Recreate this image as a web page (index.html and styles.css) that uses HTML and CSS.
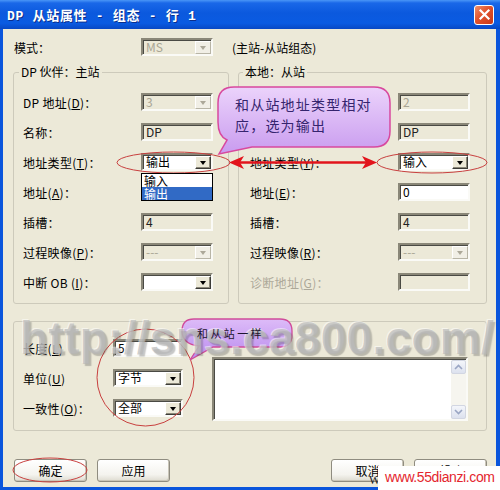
FILE: index.html
```html
<!DOCTYPE html>
<html lang="zh-CN">
<head>
<meta charset="utf-8">
<title>DP 从站属性 - 组态 - 行 1</title>
<link rel="stylesheet" href="styles.css">
</head>
<body>
<div class="window">
  <div class="titlebar">
    <span class="title">DP 从站属性 - 组态 - 行 1</span>
    <span class="close"><svg width="13" height="13" viewBox="0 0 13 13"><path d="M2.5 2.5 L10.5 10.5 M10.5 2.5 L2.5 10.5" stroke="#fff" stroke-width="2.2" stroke-linecap="square"/></svg></span>
  </div>
  <div class="client">
    <div class="mode-row">
      <span class="mode-label">模式：</span>
      <span class="combo disabled"><span class="val">MS</span><span class="drop"><i class="tri"></i></span></span>
      <span class="mode-note">(主站-从站组态)</span>
    </div>

    <div class="groups">
      <fieldset class="group g-left">
        <legend>DP 伙伴：主站</legend>
        <div class="rows">
          <span class="lbl">DP 地址(<u>D</u>)：</span>
          <span class="combo disabled"><span class="val">3</span><span class="drop"><i class="tri"></i></span></span>

          <span class="lbl">名称：</span>
          <span class="field ro">DP</span>

          <span class="lbl">地址类型(<u>T</u>)：</span>
          <span class="combo-wrap">
            <span class="combo"><span class="val">输出</span><span class="drop"><i class="tri"></i></span></span>
            <span class="droplist"><span class="opt">输入</span><span class="opt sel">输出</span></span>
          </span>

          <span class="lbl">地址(<u>A</u>)：</span>
          <span class="empty"></span>

          <span class="lbl">插槽：</span>
          <span class="field ro">4</span>

          <span class="lbl">过程映像(<u>P</u>)：</span>
          <span class="combo disabled"><span class="val">---</span><span class="drop"><i class="tri"></i></span></span>

          <span class="lbl">中断 OB (<u>I</u>)：</span>
          <span class="combo"><span class="val"></span><span class="drop"><i class="tri"></i></span></span>
        </div>
      </fieldset>

      <fieldset class="group g-right">
        <legend>本地：从站</legend>
        <div class="rows">
          <span class="lbl">DP 地址(<u>S</u>)：</span>
          <span class="field dis">2</span>

          <span class="lbl">名称：</span>
          <span class="field ro">DP</span>

          <span class="lbl">地址类型(<u>Y</u>)：</span>
          <span class="combo"><span class="val">输入</span><span class="drop"><i class="tri"></i></span></span>

          <span class="lbl">地址(<u>E</u>)：</span>
          <span class="field">0</span>

          <span class="lbl">插槽：</span>
          <span class="field ro">4</span>

          <span class="lbl">过程映像(<u>R</u>)：</span>
          <span class="combo disabled"><span class="val">---</span><span class="drop"><i class="tri"></i></span></span>

          <span class="lbl grey">诊断地址(<u>G</u>)：</span>
          <span class="field dis"></span>
        </div>
      </fieldset>
    </div>

    <fieldset class="group g-bottom">
      <div class="bgrid">
        <span class="lbl">长度(<u>L</u>)</span>
        <span class="field">5</span>
        <span class="lbl">单位(<u>U</u>)</span>
        <span class="combo short"><span class="val">字节</span><span class="drop"><i class="tri"></i></span></span>
        <span class="lbl">一致性(<u>O</u>)：</span>
        <span class="combo short"><span class="val">全部</span><span class="drop"><i class="tri"></i></span></span>
        <div class="memo">
          <div class="memo-text"></div>
          <div class="vscroll">
            <span class="sbtn"><svg width="9" height="6" viewBox="0 0 9 6"><path d="M1 5 L4.5 1.5 L8 5" fill="none" stroke="#9AA6C4" stroke-width="1.6"/></svg></span>
            <span class="strack"></span>
            <span class="sbtn"><svg width="9" height="6" viewBox="0 0 9 6"><path d="M1 1 L4.5 4.5 L8 1" fill="none" stroke="#9AA6C4" stroke-width="1.6"/></svg></span>
          </div>
        </div>
      </div>
    </fieldset>

    <div class="buttons">
      <div class="btn-pair">
        <span class="btn">确定</span>
        <span class="btn">应用</span>
      </div>
      <div class="btn-pair">
        <span class="btn">取消</span>
        <span class="btn">帮助</span>
      </div>
    </div>
  </div>

  <svg class="annot" width="500" height="490" viewBox="0 0 500 490">
    <defs>
      <linearGradient id="bub1" x1="0" y1="0" x2="0" y2="1">
        <stop offset="0" stop-color="#EBD3FB"/>
        <stop offset="1" stop-color="#C99BEF"/>
      </linearGradient>
      <linearGradient id="bub2" x1="0" y1="0" x2="0" y2="1">
        <stop offset="0" stop-color="#DDBBF8"/>
        <stop offset="1" stop-color="#B98BEE"/>
      </linearGradient>
    </defs>
    <path d="M234 87 H374 Q390 87 390 103 V131 Q390 147 374 147 H252 L219 154 L227 140 Q218 136 218 122 V103 Q218 87 234 87 Z" fill="url(#bub1)" stroke="#D8489E" stroke-width="1.5"/>
    <text class="btxt" x="235" y="110">和从站地址类型相对</text>
    <text class="btxt" x="235" y="131">应，选为输出</text>

    <ellipse cx="173.5" cy="162.5" rx="56.5" ry="10.5" fill="none" stroke="#C8403F" stroke-width="1"/>
    <ellipse cx="432" cy="162.5" rx="55" ry="10.5" fill="none" stroke="#C8403F" stroke-width="1"/>
    <ellipse cx="50" cy="470" rx="37" ry="12" fill="none" stroke="#C8403F" stroke-width="1"/>
    <ellipse cx="145.5" cy="377.5" rx="48.5" ry="48.5" fill="none" stroke="#C8403F" stroke-width="1"/>

    <line x1="238" y1="162.5" x2="368" y2="162.5" stroke="#E2141C" stroke-width="2.5"/>
    <path d="M229 162.5 L244 156 L240 162.5 L244 169 Z" fill="#E2141C"/>
    <path d="M377 162.5 L362 156 L366 162.5 L362 169 Z" fill="#E2141C"/>

    <path d="M194 319 H280 Q292 319 292 331 V335 Q292 347 280 347 H213 L190 360 L199 346 Q182 344 182 331 Q182 319 194 319 Z" fill="url(#bub2)" stroke="#D04C9A" stroke-width="1.3"/>
  </svg>

  <div class="watermark">http://sns.ca800.com/</div>

  <svg class="annot" width="500" height="490" viewBox="0 0 500 490">
    <text class="btxt2" x="197" y="338">和从站一样</text>
  </svg>

  <span class="stray">W</span>
  <div class="logo">www.55dianzi.com</div>
</div>
</body>
</html>
```

FILE: styles.css
```css
* { box-sizing: border-box; }
html, body { margin: 0; padding: 0; }
body {
  width: 500px;
  height: 490px;
  overflow: hidden;
  font-family: "Noto Sans CJK SC", sans-serif;
  font-size: 12px;
  color: #000;
  background: #fff;
}

.window {
  position: relative;
  width: 500px;
  height: 490px;
  background: #0A55DC;
  display: flex;
  flex-direction: column;
}

/* title bar */
.titlebar {
  height: 29px;
  flex: none;
  display: flex;
  align-items: center;
  padding: 0 6px 0 7px;
  background: linear-gradient(#4A96F7 0, #1A68E8 3px, #0B59DE 45%, #0A5BE2 80%, #0848C4 100%);
}
.title {
  font-family: "Liberation Mono", "Noto Sans CJK SC", monospace;
  font-weight: bold;
  font-size: 13px;
  letter-spacing: 0.7px;
  color: #fff;
  text-shadow: 1px 1px 0 #0B2E8C;
  white-space: pre;
}
.close {
  margin-left: auto;
  width: 20px;
  height: 20px;
  border: 1px solid #fff;
  border-radius: 3px;
  background: linear-gradient(135deg, #F0906A 0%, #E1522C 45%, #C8381A 100%);
  display: flex;
  align-items: center;
  justify-content: center;
}

/* client area */
.client {
  flex: 1;
  margin: 0 4px 3px 3px;
  background: #ECE9D8;
  padding: 0 9px 0 10px;
  display: flex;
  flex-direction: column;
}

.mode-row {
  margin-top: 9px;
  height: 18px;
  display: flex;
  align-items: center;
}
.mode-label { margin-left: 1px; width: 127px; }
.mode-note { margin-left: 19px; }

/* controls */
.combo, .field {
  height: 18px;
  width: 72px;
  border: 2px solid;
  border-color: #8A8778 #FAFAF6 #FAFAF6 #8A8778;
  box-shadow: inset 1px 1px 0 #4A4A44;
  background: #fff;
  line-height: 14px;
  font-size: 12px;
}
.field { padding-left: 3px; display: block; }
.field.ro { background: #ECE9D8; color: #222; }
.field.dis { background: #ECE9D8; color: #A8A594; }

.combo { display: flex; align-items: stretch; }
.combo .val { flex: 1; padding-left: 3px; white-space: nowrap; }
.combo .drop {
  width: 16px;
  flex: none;
  border: 1px solid;
  border-color: #fff #3C3C38 #3C3C38 #fff;
  box-shadow: inset -1px -1px 0 #8A8778;
  background: #ECE9D8;
  display: flex;
  align-items: center;
  justify-content: center;
  margin: 1px 0 0 0;
}
.tri {
  display: block;
  width: 0;
  height: 0;
  border-left: 3.5px solid transparent;
  border-right: 3.5px solid transparent;
  border-top: 4px solid #000;
}
.combo.disabled { background: #ECE9D8; color: #A8A594; }
.combo.disabled .drop {
  border-color: #fff #B8B5A6 #B8B5A6 #fff;
  box-shadow: none;
  background: #F1EFE6;
}
.combo.disabled .tri { border-top-color: #ACA899; }
.combo.short { width: 70px; }

.combo-wrap { position: relative; display: block; width: 72px; }
.droplist {
  position: absolute;
  left: 0;
  top: 20px;
  width: 72px;
  border: 1px solid #000;
  background: #fff;
  display: flex;
  flex-direction: column;
  z-index: 2;
}
.opt { height: 13px; line-height: 13px; padding-left: 2px; }
.opt.sel { background: #316AC5; color: #fff; }

/* group boxes */
.groups {
  margin-top: 8px;
  display: grid;
  grid-template-columns: 216px 249px;
  column-gap: 9px;
}
.group {
  margin: 0;
  min-width: 0;
  border: 1px solid #CDCABB;
  border-radius: 3px;
}
.group legend { padding: 0 2px; line-height: 16px; }
.g-left { padding: 7px 15px 6px 9px; }
.g-left legend { margin-left: -4px; }
.g-right { padding: 7px 16px 6px 11px; }
.g-right legend { margin-left: -7px; }

.rows {
  display: grid;
  grid-template-columns: 1fr 72px;
  grid-auto-rows: 30px;
  align-items: center;
}
.lbl { white-space: nowrap; letter-spacing: 0.3px; }
.lbl.grey { color: #ACA899; }
.lbl u { text-underline-offset: 1px; }

.g-bottom {
  margin-top: 17px;
  padding: 11px 18px 7px 9px;
}
.bgrid {
  display: grid;
  grid-template-columns: 90px 99px 256px;
  grid-template-rows: repeat(3, 30px);
  align-items: center;
}
.bgrid .field, .bgrid .combo { width: 70px; }
.memo {
  grid-column: 3;
  grid-row: 1 / 4;
  align-self: end;
  margin-bottom: 2px;
  height: 64px;
  border: 2px solid;
  border-color: #8A8778 #FAFAF6 #FAFAF6 #8A8778;
  box-shadow: inset 1px 1px 0 #4A4A44;
  background: #fff;
  display: flex;
  padding: 1px 0 0 1px;
}
.memo-text { flex: 1; }
.vscroll {
  width: 15px;
  display: flex;
  flex-direction: column;
  background: #F6F5EF;
}
.sbtn {
  height: 14px;
  border: 1px solid #D2D6E2;
  border-radius: 2px;
  background: linear-gradient(#F4F6FB, #DCE1EE);
  display: flex;
  align-items: center;
  justify-content: center;
}
.strack { flex: 1; }

/* buttons */
.buttons {
  margin-top: 28px;
  padding-left: 1px;
  display: flex;
  justify-content: space-between;
}
.btn-pair { display: flex; gap: 10px; }
.btn {
  width: 73px;
  height: 23px;
  display: flex;
  align-items: center;
  justify-content: center;
  border: 1px solid #8F8C80;
  border-radius: 3px;
  background: linear-gradient(#FFFFFF, #F4F3EE 70%, #DEDBD0);
  box-shadow: inset -1px -1px 0 #C9C5B8;
}

/* annotations lying over the dialog */
.annot {
  position: absolute;
  left: 0;
  top: 0;
  pointer-events: none;
}
.btxt {
  font-family: "Noto Sans CJK SC", sans-serif;
  font-size: 14px;
  letter-spacing: 1.2px;
  fill: #35246E;
}
.btxt2 {
  font-family: "Noto Sans CJK SC", sans-serif;
  font-size: 11px;
  letter-spacing: 2.4px;
  fill: #1E1630;
}

.watermark {
  position: absolute;
  left: 20px;
  top: 315px;
  font-family: "Liberation Sans", Arial, sans-serif;
  font-weight: bold;
  font-size: 46px;
  line-height: 1;
  letter-spacing: 0.3px;
  color: rgba(182, 182, 182, 0.66);
  text-shadow: 2px 2px 1px rgba(80, 80, 80, 0.32), -1px -1px 0 rgba(255, 255, 255, 0.5);
  white-space: nowrap;
  pointer-events: none;
}

.stray {
  position: absolute;
  left: 369px;
  top: 473px;
  font-family: "Liberation Serif", serif;
  font-size: 12px;
  line-height: 14px;
  color: #222;
}
.logo {
  position: absolute;
  left: 378px;
  top: 466px;
  width: 122px;
  height: 24px;
  background: #fff;
  padding-left: 7px;
  font-family: "Liberation Sans", Arial, sans-serif;
  font-size: 14px;
  letter-spacing: -0.4px;
  line-height: 23px;
  color: #E4262E;
}
```
